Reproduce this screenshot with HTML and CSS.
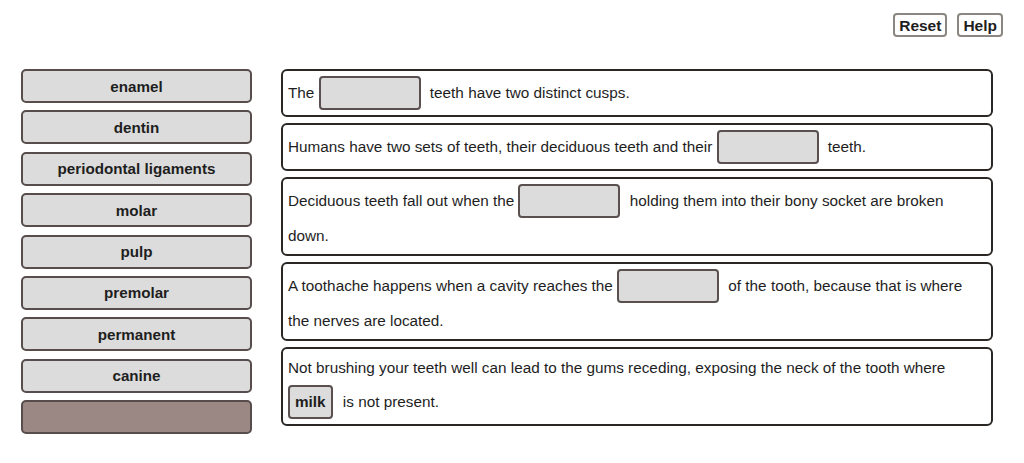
FILE: index.html
```html
<!DOCTYPE html>
<html>
<head>
<meta charset="utf-8">
<link rel="stylesheet" href="styles.css">
</head>
<body>
<div class="toolbar">
  <button class="tool-btn">Reset</button>
  <button class="tool-btn">Help</button>
</div>
<div class="main">
  <div class="bank">
    <div class="tile">enamel</div>
    <div class="tile">dentin</div>
    <div class="tile">periodontal ligaments</div>
    <div class="tile">molar</div>
    <div class="tile">pulp</div>
    <div class="tile">premolar</div>
    <div class="tile">permanent</div>
    <div class="tile">canine</div>
    <div class="tile tile-empty"></div>
  </div>
  <div class="sentences">
    <div class="sentence">The <span class="blank"></span> teeth have two distinct cusps.</div>
    <div class="sentence">Humans have two sets of teeth, their deciduous teeth and their <span class="blank"></span> teeth.</div>
    <div class="sentence">Deciduous teeth fall out when the <span class="blank"></span> holding them into their bony socket are broken down.</div>
    <div class="sentence">A toothache happens when a cavity reaches the <span class="blank"></span> of the tooth, because that is where the nerves are located.</div>
    <div class="sentence">Not brushing your teeth well can lead to the gums receding, exposing the neck of the tooth where <span class="filled">milk</span> is not present.</div>
  </div>
</div>
</body>
</html>
```
FILE: styles.css
```css
* { box-sizing: border-box; }
html, body { margin: 0; padding: 0; background: #ffffff; }
body {
  font-family: "Liberation Sans", Arial, Helvetica, sans-serif;
  color: #1e1e1e;
  width: 1024px;
  height: 463px;
  overflow: hidden;
}
.toolbar {
  display: flex;
  justify-content: flex-end;
  gap: 10px;
  padding: 13px 21px 0 0;
  height: 69px;
}
.tool-btn {
  font-family: "Liberation Sans", Arial, sans-serif;
  font-weight: bold;
  font-size: 15.5px;
  line-height: 17px;
  height: 24px;
  padding: 2px 4px;
  background: #ffffff;
  color: #1e1e1e;
  border: 2px solid #8b8681;
  border-radius: 4px;
}
.main {
  display: flex;
  align-items: flex-start;
  gap: 29px;
  padding-left: 21px;
}
.bank {
  width: 231px;
  display: flex;
  flex-direction: column;
  gap: 7.4px;
}
.tile {
  height: 34px;
  background: #dcdcdc;
  border: 2px solid #574d4d;
  border-radius: 5px;
  font-weight: bold;
  font-size: 15.2px;
  display: flex;
  align-items: center;
  justify-content: center;
  color: #1e1e1e;
}
.tile-empty {
  background: #9b8885;
}
.sentences {
  width: 712px;
  display: flex;
  flex-direction: column;
  gap: 6px;
}
.sentence {
  border: 2px solid #2a2724;
  border-radius: 6px;
  padding: 3px 12px 3px 5px;
  font-size: 15.3px;
  line-height: 31px;
  color: #1e1e1e;
}
.blank {
  display: inline-block;
  vertical-align: -14px;
  width: 102px;
  height: 34px;
  margin: 2px 5px 2px 0;
  background: #dcdcdc;
  border: 2px solid #5a5050;
  border-radius: 4px;
}
.filled {
  display: inline-block;
  vertical-align: baseline;
  height: 34px;
  line-height: 30px;
  margin: 2px 6px 2px 0;
  padding: 0 5px;
  background: #dcdcdc;
  border: 2px solid #5a5050;
  border-radius: 4px;
  font-weight: bold;
}
```
